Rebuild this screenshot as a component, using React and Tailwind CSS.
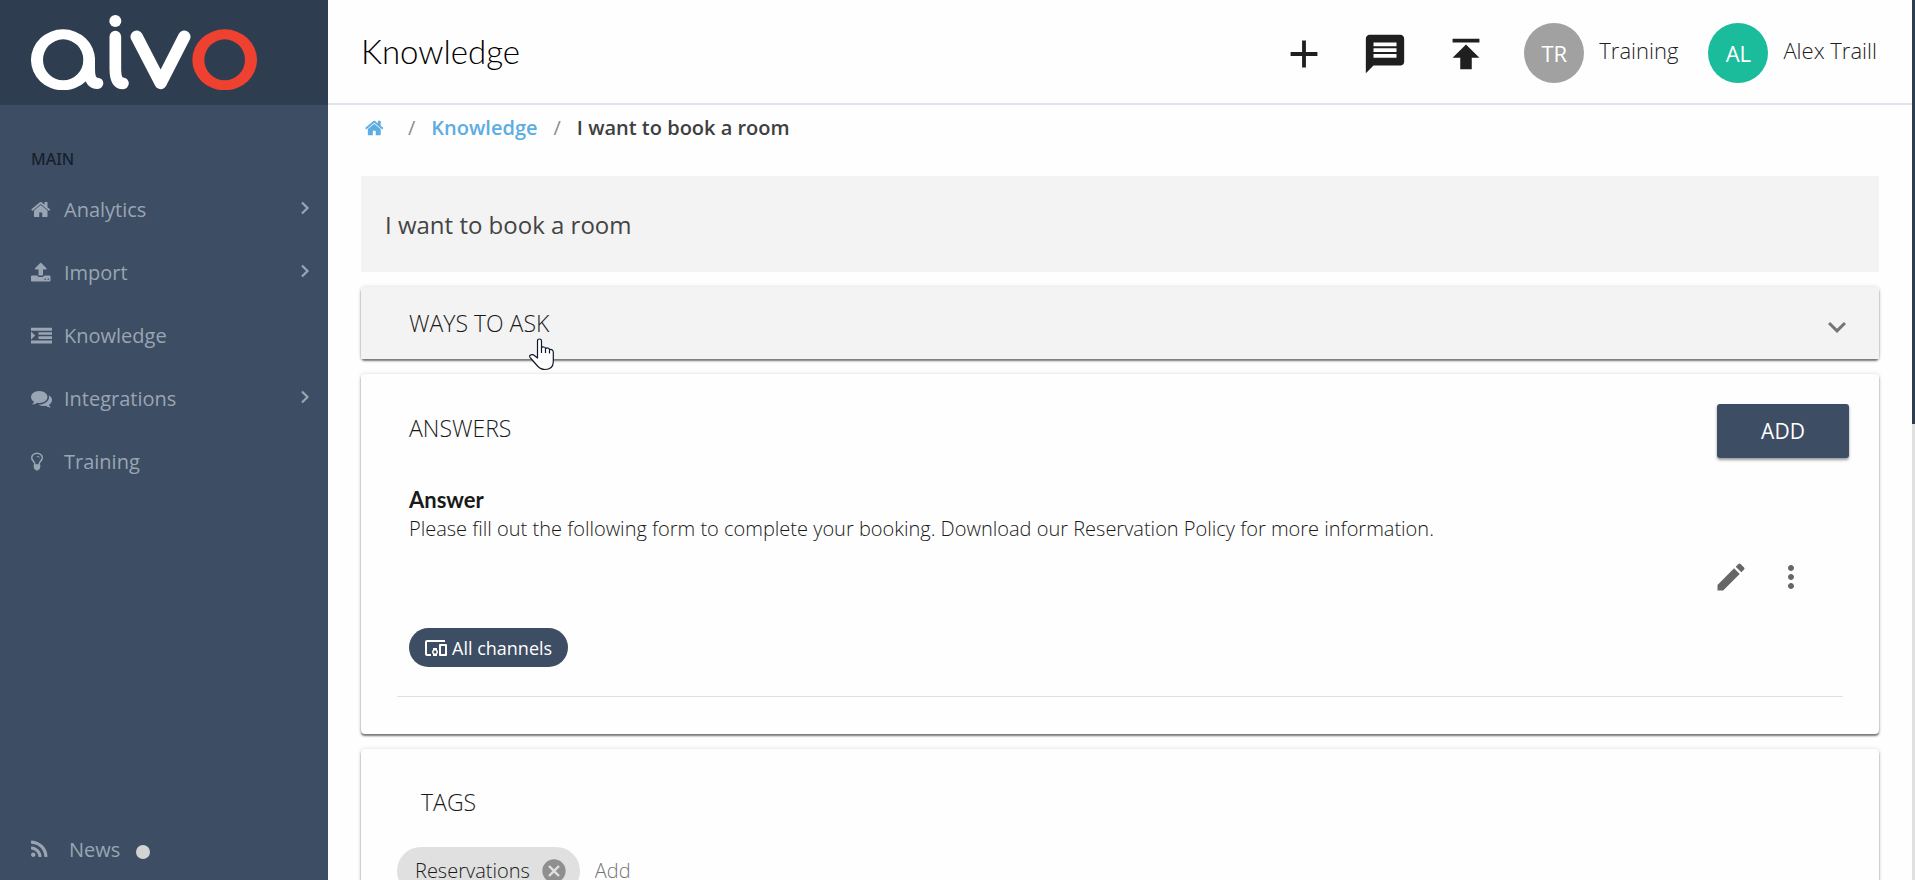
import { useState } from "react";
import { MdAdd, MdMessage, MdPublish, MdEdit, MdMoreVert, MdDevicesOther, MdCancel, MdKeyboardArrowDown } from "react-icons/md";

const ICON_PATHS = {
  home: "M1408 992v480q0 26-19 45t-45 19h-384v-384h-256v384h-384q-26 0-45-19t-19-45v-480q0-1 .5-3t.5-3l575-474 575 474q1 2 1 6zm223-69l-62 74q-8 9-21 11h-3q-13 0-21-7l-692-577-692 577q-12 8-24 7-13-2-21-11l-62-74q-8-10-7-23.5t11-21.5l719-599q32-26 76-26t76 26l244 204v-195q0-14 9-23t23-9h192q14 0 23 9t9 23v408l219 182q10 8 11 21.5t-7 23.5z",
  upload: "M1280 1472q0-26-19-45t-45-19-45 19-19 45 19 45 45 19 45-19 19-45zm256 0q0-26-19-45t-45-19-45 19-19 45 19 45 45 19 45-19 19-45zm128-224v320q0 40-28 68t-68 28h-1472q-40 0-68-28t-28-68v-320q0-40 28-68t68-28h427q21 56 70.5 92t110.5 36h256q61 0 110.5-36t70.5-92h427q40 0 68 28t28 68zm-325-648q-17 40-59 40h-256v448q0 26-19 45t-45 19h-256q-26 0-45-19t-19-45v-448h-256q-42 0-59-40-17-39 14-69l448-448q18-19 45-19t45 19l448 448q31 30 14 69z",
  comments: "M1408 768q0 139-94 257t-256.5 186.5-353.5 68.5q-86 0-176-16-124 88-278 128-36 9-86 16h-3q-11 0-20.5-8t-11.5-21q-1-3-1-6.5t.5-6.5 2-6l2.5-5 3.5-5.5 4-5 4.5-5 4-4.5q5-6 23-25t26-29.5 22.5-29 25-38.5 20.5-44q-124-72-195-177t-71-224q0-139 94-257t256.5-186.5 353.5-68.5 353.5 68.5 256.5 186.5 94 257zm384 256q0 120-71 224.5t-195 176.5q10 24 20.5 44t25 38.5 22.5 29 26 29.5 23 25q1 1 4 4.5t4.5 5 4 5 3.5 5.5l2.5 5 2 6 .5 6.5-1 6.5q-3 14-13 22t-22 7q-50-7-86-16-154-40-278-128-90 16-176 16-271 0-472-132 58 4 88 4 161 0 309-45t264-129q125-92 192-212t67-254q0-77-23-152 129 71 204 178t75 230z",
  indent: "M0 224h1792v256H0zM640 608h1152v224H640zM640 960h1152v224H640zM0 1312h1792v256H0zM0 544l352 352L0 1248z",
  bulb: "M736 576q0 13-9.5 22.5t-22.5 9.5-22.5-9.5-9.5-22.5q0-46-54-71t-106-25q-13 0-22.5-9.5t-9.5-22.5 9.5-22.5 22.5-9.5q50 0 99.5 16t87 54 37.5 90zm160 0q0-72-34.5-134t-90-101.5-123-62-136.5-22.5-136.5 22.5-123 62-90 101.5-34.5 134q0 101 68 180 10 11 30.5 33t30.5 33q128 153 141 298h228q13-145 141-298 10-11 30.5-33t30.5-33q68-79 68-180zm128 0q0 155-103 268-45 49-74.5 87t-59.5 95.5-34 107.5q47 28 47 82 0 37-25 64 25 27 25 64 0 52-45 81 13 23 13 47 0 46-31.5 71t-77.5 25q-20 44-60 70t-87 26-87-26-60-70q-46 0-77.5-25t-31.5-71q0-24 13-47-45-29-45-81 0-37 25-64-25-27-25-64 0-54 47-82-4-50-34-107.5t-59.5-95.5-74.5-87q-103-113-103-268 0-99 44.5-184.5t117-142 164-89 186.5-32.5 186.5 32.5 164 89 117 142 44.5 184.5z",
  rss: "M384 1344q0 80-56 136t-136 56-136-56-56-136 56-136 136-56 136 56 56 136zm512 123q2 28-17 48-18 21-47 21h-135q-25 0-43-16.5t-20-41.5q-22-229-184.5-391.5t-391.5-184.5q-25-2-41.5-20t-16.5-43v-135q0-29 21-47 17-17 43-17h5q160 13 306 80.5t259 181.5q114 113 181.5 259t80.5 306zm512 2q2 27-18 47-18 20-46 20h-143q-26 0-44.5-17.5t-19.5-42.5q-12-215-101-408.5t-231.5-336-336-231.5-408.5-102q-25-1-42.5-19.5t-17.5-43.5v-143q0-28 20-46 18-18 44-18h3q262 13 501.5 120t425.5 294q187 186 294 425.5t120 501.5z",
};

const NAV_ITEMS = [
  { label: "Analytics", icon: "home", hasChildren: true },
  { label: "Import", icon: "upload", hasChildren: true },
  { label: "Knowledge", icon: "indent" },
  { label: "Integrations", icon: "comments", hasChildren: true },
  { label: "Training", icon: "bulb" },
];

const CARD = "bg-[#fefefe] rounded-sm shadow-[0_2px_2px_rgba(0,0,0,0.5),0_0_4px_rgba(0,0,0,0.15)]";

function Icon({ name, className }) {
  return (
    <svg viewBox="0 0 1792 1792" fill="currentColor" className={className} aria-hidden="true">
      <path d={ICON_PATHS[name]} />
    </svg>
  );
}

function Logo() {
  return (
    <svg viewBox="93 44 678 226" className="w-[226px]" role="img" aria-label="aivo">
      <g fill="none" stroke="#fff" strokeLinecap="round" strokeLinejoin="round">
        <path d="M268 178V205Q268 249 293 249" strokeWidth="34" />
        <path d="M346 109V205Q346 249 369 249" strokeWidth="35" />
        <path d="M410 109L482 248L553 109" strokeWidth="37" />
      </g>
      <path fill="#fff" fillRule="evenodd" d="M189 87a96 91.500 0 1 0 0 183a96 91.500 0 1 0 0-183zM189.500 117a60.500 61.500 0 1 1 0 123a60.500 61.500 0 1 1 0-123z" />
      <circle cx="346" cy="62" r="18" fill="#fff" />
      <path fill="#ef4130" fillRule="evenodd" d="M674 87a97 91.500 0 1 0 0 183a97 91.500 0 1 0 0-183zM674 117a61 61.500 0 1 1 0 123a61 61.500 0 1 1 0-123z" />
    </svg>
  );
}

function Sidebar() {
  return (
    <aside className="w-[328px] shrink-0 flex flex-col bg-[#3d4d63] text-[#9aa5b3]">
      <div className="h-[105px] shrink-0 pl-[31px] flex items-center bg-[#2f3d50]">
        <Logo />
      </div>
      <nav className="flex-1 pt-10">
        <p className="pl-[31px] font-['Noto_Sans',sans-serif] font-medium text-base leading-7 text-[#18202c]">MAIN</p>
        <ul className="mt-[5px]">
          {NAV_ITEMS.map(item => (
            <li key={item.label}>
              <a href="#" className="h-[63px] pl-[31px] pr-[18px] flex items-center text-xl">
                <span className="w-[33px] flex"><Icon name={item.icon} className="w-[21px] h-[21px]" /></span>
                <span className="flex-1">{item.label}</span>
                {item.hasChildren && (
                  <svg viewBox="0 0 10 14" className="w-[10px] h-[14px] mb-1" fill="none" stroke="currentColor" strokeWidth="2.2" aria-hidden="true">
                    <path d="M2 1.500L7.500 7L2 12.500" />
                  </svg>
                )}
              </a>
            </li>
          ))}
        </ul>
      </nav>
      <a href="#" className="h-[61px] pl-[31px] flex items-center text-xl">
        <Icon name="rss" className="w-[21px] h-[21px] mr-[17px]" />
        News
        <span className="w-[14px] h-[14px] ml-4 mt-1 rounded-full bg-[#d2d4d3]" />
      </a>
    </aside>
  );
}

function Avatar({ initials, name, className }) {
  return (
    <a href="#" className="flex items-center gap-[15px]">
      <span className={`w-[60px] h-[60px] rounded-full flex items-center justify-center text-[22px] text-white ${className}`}>{initials}</span>
      <span className="text-[22px] font-light mb-1.5">{name}</span>
    </a>
  );
}

function Header() {
  return (
    <header className="h-[105px] shrink-0 pl-[33px] pr-[35px] flex items-center border-b-2 border-[#dfe4ec] text-[#1f1f1f]">
      <h1 className="flex-1 font-['Lato',sans-serif] font-light text-[33px] text-black">Knowledge</h1>
      <div className="pt-1 flex items-center gap-[35px]">
        <button aria-label="New"><MdAdd className="w-[46px] h-[46px]" /></button>
        <button aria-label="Messages"><MdMessage className="w-[46px] h-[46px]" /></button>
        <button aria-label="Publish"><MdPublish className="w-[46px] h-[46px]" /></button>
      </div>
      <div className="ml-[35px] pt-[3px] flex items-center gap-[30px]">
        <Avatar initials="TR" name="Training" className="bg-[#a1a1a1]" />
        <Avatar initials="AL" name="Alex Traill" className="bg-[#1abc9c]" />
      </div>
    </header>
  );
}

function Breadcrumb() {
  return (
    <nav className="h-[46px] pl-1 flex items-center text-xl font-semibold">
      <a href="#" aria-label="Home" className="text-[#5dade2]"><Icon name="home" className="w-5 h-5" /></a>
      <span className="ml-[23px] mr-4 font-normal text-[#8d8d8d]">/</span>
      <a href="#" className="text-[#5dade2]">Knowledge</a>
      <span className="mx-4 font-normal text-[#8d8d8d]">/</span>
      <span className="text-[#3e3f41]">I want to book a room</span>
    </nav>
  );
}

// hand pointer resting on the collapsed panel header
function HandPointer() {
  return (
    <svg viewBox="0 0 25 33" className="absolute left-[168px] top-[51px] w-[25px] h-[33px] pointer-events-none" aria-hidden="true">
      <path
        d="M8.500 20V3Q8.500 1 10.500 1Q12.500 1 12.500 3V9.500Q13.500 8.500 15 9Q16.500 9.300 16.500 10.500Q18 9.500 19.500 10.300Q20.500 10.800 20.500 11.800Q22 11 23.300 12Q24.300 12.800 24.300 14.500V24Q24 31.500 16 31.500Q11.500 31.500 8.500 28L1.500 20Q-.5 17.500 2 16.800Q4 16.300 6 18L8.500 20Z"
        fill="#fff" stroke="#10182b" strokeWidth="1.2" strokeLinejoin="round"
      />
      <path d="M12.500 9V15M16.500 10.500V15M20.500 11.500V15.500" stroke="#10182b" strokeWidth="1.2" />
    </svg>
  );
}

export default function App() {
  const [question, setQuestion] = useState("I want to book a room");
  const [tags, setTags] = useState(["Reservations"]);
  const [newTag, setNewTag] = useState("");

  function addTag(e) {
    if (e.key !== "Enter" || !newTag.trim()) return;
    setTags([...tags, newTag.trim()]);
    setNewTag("");
  }

  return (
    <div className="h-screen flex overflow-hidden bg-[#fefefe] font-['Open_Sans',sans-serif] text-[#1a1a1a]">
      <Sidebar />
      <div className="flex-1 min-w-0 flex flex-col">
        <Header />
        <main className="flex-1 min-h-0 overflow-hidden px-[33px]">
          <Breadcrumb />
          <input
            aria-label="Question"
            value={question}
            onChange={e => setQuestion(e.target.value)}
            className="block w-full h-24 mt-[25px] px-6 bg-[#f3f3f3] text-[#444] text-2xl outline-none"
          />

          <section className={`relative mt-[15px] ${CARD}`}>
            <button className="w-full h-[72px] pl-12 pr-6 flex items-center justify-between bg-[#f3f3f3] text-[23px] font-light">
              WAYS TO ASK
              <MdKeyboardArrowDown className="w-9 h-9 mt-2 text-[#757575]" />
            </button>
            <HandPointer />
          </section>

          <section className={`mt-[15px] pt-[30px] px-[30px] pb-[37px] ${CARD}`}>
            <div className="pl-[18px] flex items-start justify-between">
              <h2 className="text-[23px] leading-[48px] font-light">ANSWERS</h2>
              <button className="w-[132px] h-[54px] pt-0.5 rounded-[3px] bg-[#3d4d63] text-white text-[21px] shadow-[0_2px_3px_rgba(0,0,0,0.4)]">ADD</button>
            </div>
            <article className="mt-7 mx-1.5 pb-[29px] border-b border-[#e0e0e0]">
              <div className="px-3">
                <h3 className="font-['Lato',sans-serif] font-bold text-[22px] leading-7">Answer</h3>
                <p className="text-xl leading-[30px] font-light">
                  Please fill out the following form to complete your booking. Download our Reservation Policy for more information.
                </p>
                <div className="mt-[15px] mr-[22px] flex justify-end gap-6 text-[#666]">
                  <button aria-label="Edit answer"><MdEdit className="w-9 h-9" /></button>
                  <button aria-label="More options"><MdMoreVert className="w-9 h-9" /></button>
                </div>
                <span className="mt-[33px] h-[39px] w-fit pl-[15px] pr-4 rounded-full inline-flex items-center gap-1 bg-[#3d4d63] text-white text-lg">
                  <MdDevicesOther className="w-6 h-6" />All channels
                </span>
              </div>
            </article>
          </section>

          <section className={`mt-[15px] pt-[29px] px-9 pb-9 ${CARD}`}>
            <h2 className="pl-6 text-[23px] leading-[48px] font-light">TAGS</h2>
            <div className="mt-[21px] flex items-center">
              {tags.map(tag => (
                <span key={tag} className="h-12 pl-[18px] pr-3 mr-[15px] rounded-full flex items-center gap-2.5 bg-[#e0e0e0] text-xl font-light">
                  {tag}
                  <button aria-label={`Remove ${tag}`} onClick={() => setTags(tags.filter(t => t !== tag))}>
                    <MdCancel className="w-7 h-7 text-[#8f8f8f]" />
                  </button>
                </span>
              ))}
              <input
                aria-label="Add tag"
                placeholder="Add"
                value={newTag}
                onChange={e => setNewTag(e.target.value)}
                onKeyDown={addTag}
                className="flex-1 bg-transparent text-xl font-light outline-none placeholder:text-[#757575]"
              />
            </div>
          </section>
        </main>
      </div>
      <div className="w-[3px] shrink-0 bg-[#e0e0e0]">
        <div className="h-[424px] bg-[#2f3d50]" />
      </div>
    </div>
  );
}
